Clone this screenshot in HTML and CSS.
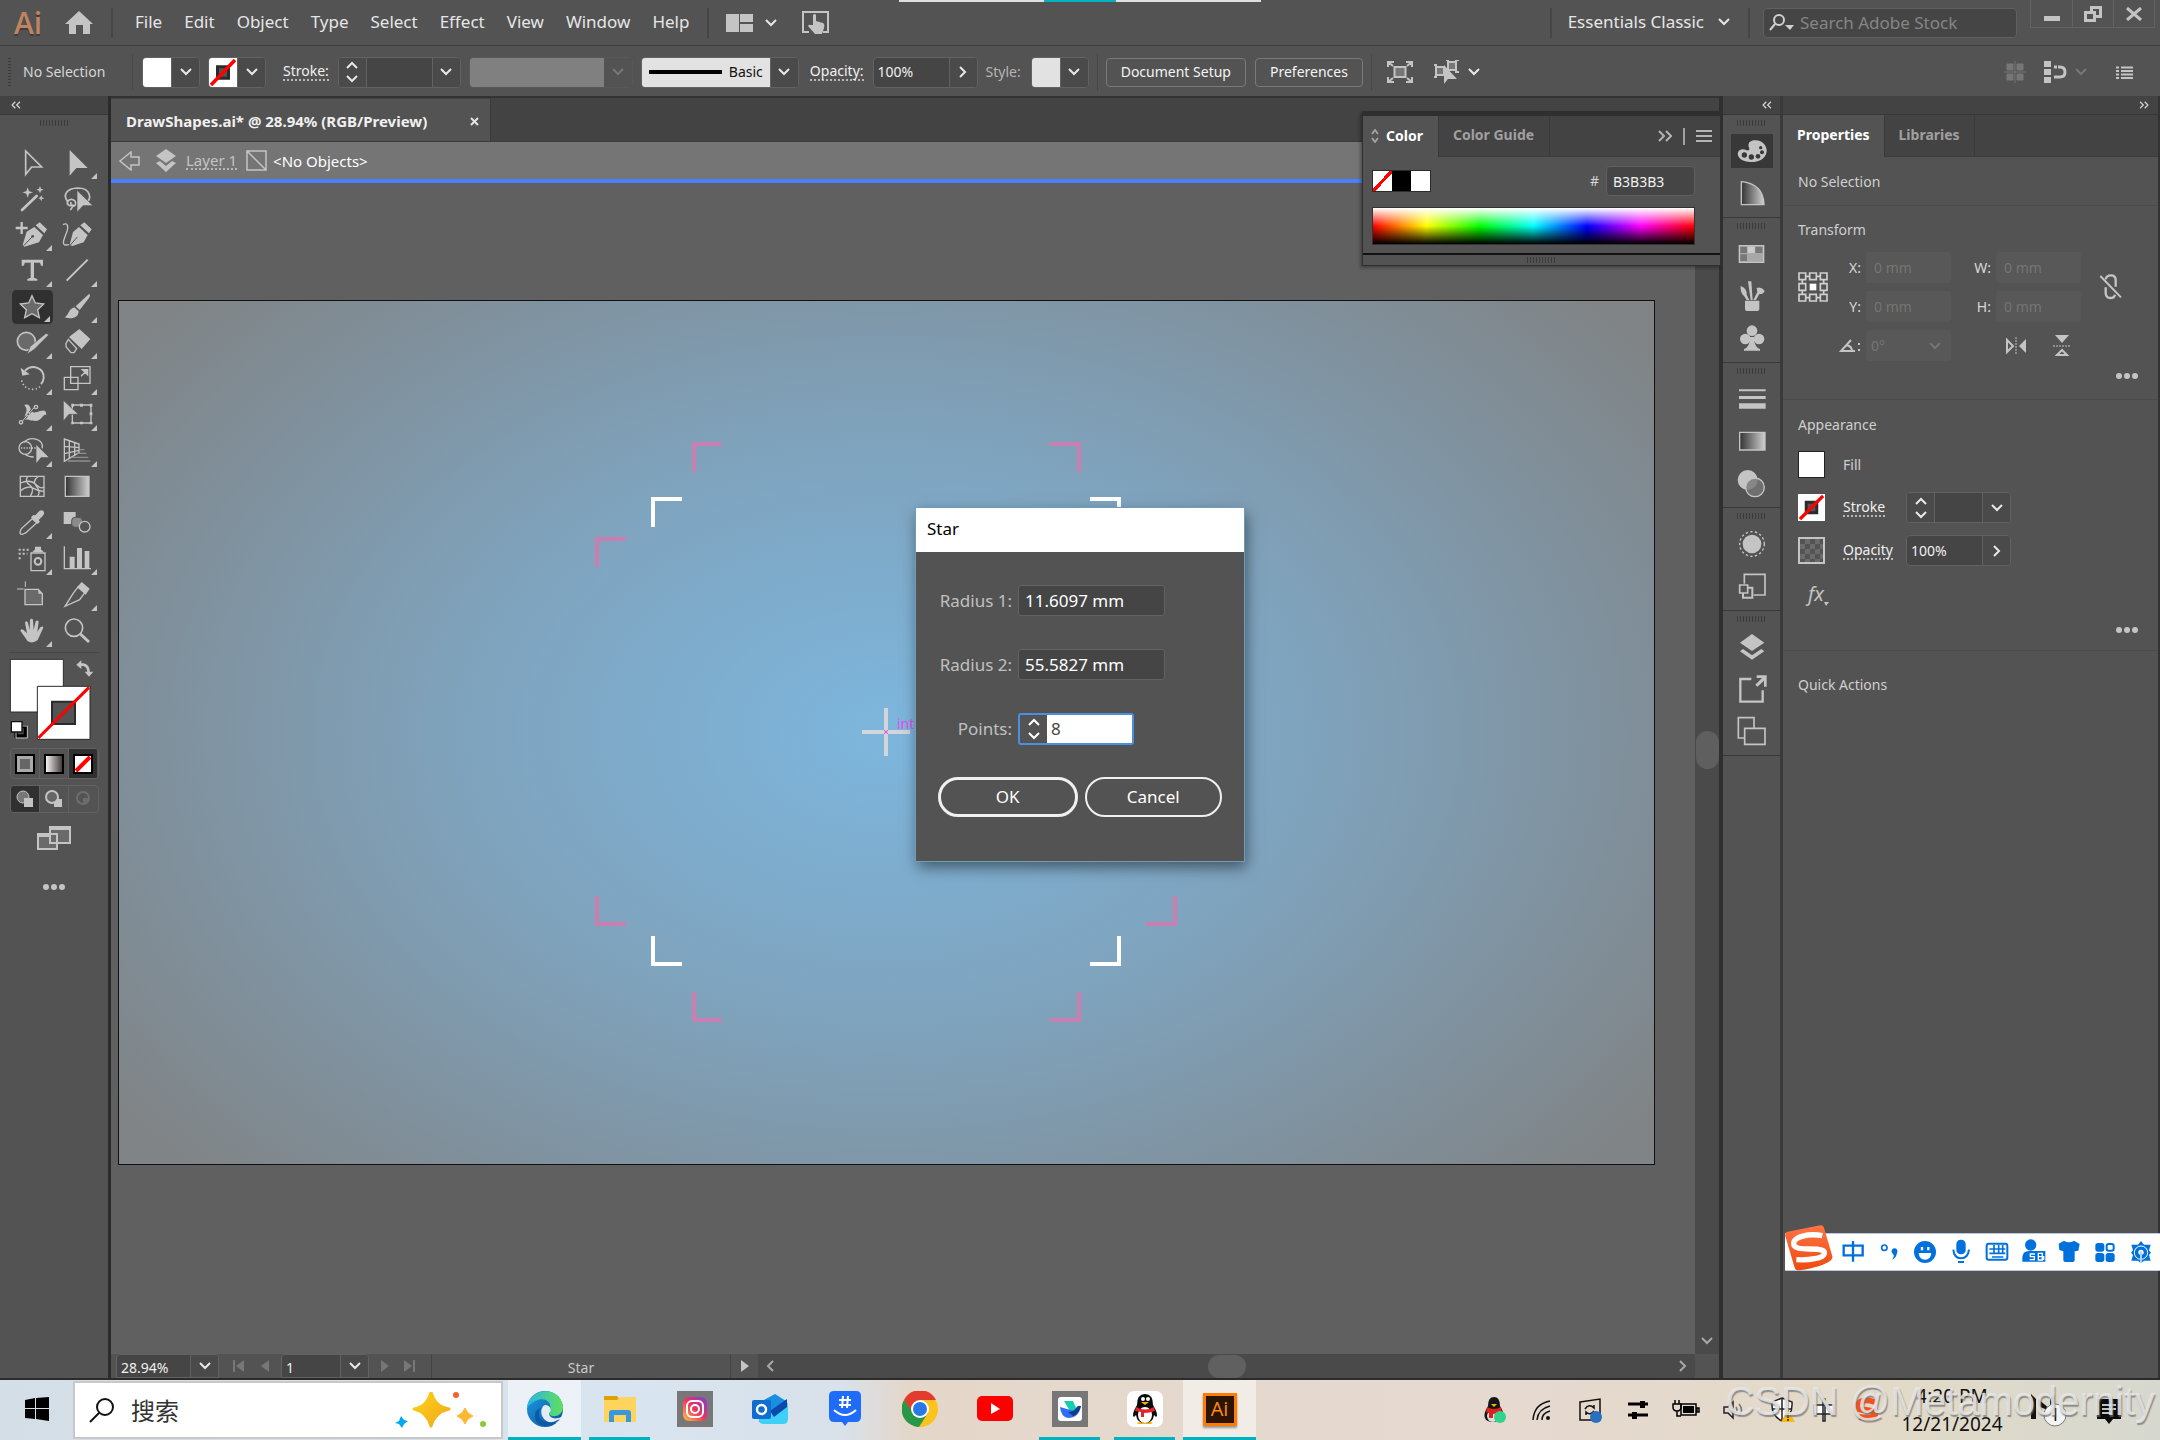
FILE: index.html
```
<!DOCTYPE html>
<html lang="en">
<head>
<meta charset="utf-8">
<title>DrawShapes.ai - Illustrator</title>
<link rel="stylesheet" href="styles.css">
</head>
<body>
<svg class="defs" aria-hidden="true">
  <defs>
    <symbol id="down" viewBox="0 0 12 8"><path d="M1 1l5 5 5-5" fill="none" stroke="currentColor" stroke-width="2"/></symbol>
    <symbol id="up" viewBox="0 0 12 8"><path d="M1 7l5-5 5 5" fill="none" stroke="currentColor" stroke-width="2"/></symbol>
    <symbol id="right" viewBox="0 0 8 12"><path d="M1 1l5 5-5 5" fill="none" stroke="currentColor" stroke-width="2"/></symbol>
    <symbol id="left" viewBox="0 0 8 12"><path d="M7 1L2 6l5 5" fill="none" stroke="currentColor" stroke-width="2"/></symbol>
    <symbol id="dright" viewBox="0 0 14 12"><path d="M1 1l5 5-5 5M8 1l5 5-5 5" fill="none" stroke="currentColor" stroke-width="2"/></symbol>
    <symbol id="dleft" viewBox="0 0 14 12"><path d="M6 1L1 6l5 5M13 1L8 6l5 5" fill="none" stroke="currentColor" stroke-width="2"/></symbol>
    <symbol id="dots" viewBox="0 0 22 6"><g fill="#c4c4c4"><circle cx="3" cy="3" r="3"/><circle cx="11" cy="3" r="3"/><circle cx="19" cy="3" r="3"/></g></symbol>
    <symbol id="none" viewBox="0 0 28 28"><path fill="#fff" d="M0 0h28v28H0z"/><path d="M8.500 8.500h11v11h-11z" fill="#535353" stroke="#2b2b2b" stroke-width="3"/><path d="M2 26L26 2" stroke="#f00" stroke-width="3.500"/></symbol>
    <linearGradient id="grey"><stop offset="0" stop-color="#333"/><stop offset="1" stop-color="#d0d0d0"/></linearGradient>
    <linearGradient id="warm"><stop offset="0" stop-color="#fff"/><stop offset="1" stop-color="#3a3030"/></linearGradient>
    <linearGradient id="edgeA" x1="0" x2="1"><stop offset="0" stop-color="#2bb5e8"/><stop offset="1" stop-color="#5fe05a"/></linearGradient>
    <linearGradient id="edgeB" x1="0" x2="1" y1="0" y2="1"><stop offset="0" stop-color="#1b9de2"/><stop offset="1" stop-color="#0c4f9e"/></linearGradient>
    <linearGradient id="insta" x1="0" y1="1" x2="1" y2="0"><stop offset="0" stop-color="#ffc63f"/><stop offset=".5" stop-color="#f0305f"/><stop offset="1" stop-color="#7a3be0"/></linearGradient>
    <linearGradient id="sogou" x1="0" y1="0" x2="0" y2="1"><stop offset="0" stop-color="#ff7444"/><stop offset="1" stop-color="#f04a10"/></linearGradient>
    <linearGradient id="gold" x1="0" y1="0" x2="1" y2="1"><stop offset="0" stop-color="#ffd31a"/><stop offset="1" stop-color="#f0a81c"/></linearGradient>
  </defs>
</svg>

<div class="desktop">
  <header class="menubar">
    <span class="brand">Ai</span>
    <button class="plain home" aria-label="Home"><svg width="28" height="24" viewBox="0 0 28 24"><path d="M14 0l14 13h-3v10h-7v-9h-7v9H4V13H0z" fill="#c4c4c4"/></svg></button>
    <nav class="menus">
      <a href="#">File</a><a href="#">Edit</a><a href="#">Object</a><a href="#">Type</a><a href="#">Select</a><a href="#">Effect</a><a href="#">View</a><a href="#">Window</a><a href="#">Help</a>
    </nav>
    <button class="plain arrange" aria-label="Arrange documents"><svg width="27" height="18" viewBox="0 0 27 18"><path d="M0 0h13v18H0zM14 0h13v8H14zM14 10h13v8H14z" fill="#c4c4c4"/></svg><svg width="12" height="8"><use href="#down"/></svg></button>
    <button class="plain touch" aria-label="Touch workspace"><svg width="27" height="24" viewBox="0 0 27 24"><path d="M7 21H1V1h25v20h-5" fill="none" stroke="#c4c4c4" stroke-width="2"/><path d="M11 14V4q2-2 3 0v6l7 2q2 1 1 5l-2 6h-7l-7-8q1-2 3-1z" fill="#c4c4c4"/></svg></button>
    <div class="menubar-end">
      <button class="plain switcher">Essentials Classic <svg width="12" height="8"><use href="#down"/></svg></button>
      <label class="stock"><svg width="25" height="18" viewBox="0 0 25 18"><g fill="none" stroke="#d0d0d0" stroke-width="2"><circle cx="10" cy="6" r="5"/><path d="M6 10l-5 6"/></g><path d="M16 11h9l-4 5z" fill="#d0d0d0"/></svg><input type="search" placeholder="Search Adobe Stock" aria-label="Search Adobe Stock"></label>
      <div class="winbtns">
        <button aria-label="Minimize"><svg width="16" height="16"><path d="M0 10h16v5H0z" fill="#c4c4c4"/></svg></button>
        <button aria-label="Restore"><svg width="18" height="16"><path d="M1.500 6.500h9v8h-9zM7.500 6V1.500h9v9H11" fill="none" stroke="#c4c4c4" stroke-width="3"/></svg></button>
        <button aria-label="Close"><svg width="16" height="14"><path d="M1 1l14 12M15 1L1 13" stroke="#c4c4c4" stroke-width="3"/></svg></button>
      </div>
    </div>
  </header>

  <section class="controlbar">
    <i class="vgrip"></i>
    <span class="status">No Selection</span>
    <div class="combo swatch"><span class="chip white"></span><button aria-label="Fill colour"><svg width="12" height="8"><use href="#down"/></svg></button></div>
    <div class="combo swatch"><span class="chip"><svg width="28" height="29" viewBox="0 0 28 28" preserveAspectRatio="none"><use href="#none"/></svg></span><button aria-label="Stroke colour"><svg width="12" height="8"><use href="#down"/></svg></button></div>
    <label class="dotted after" for="stroke-w">Stroke:</label>
    <div class="combo stroke"><button class="spin" aria-label="Step"><svg width="12" height="8"><use href="#up"/></svg><svg width="12" height="8"><use href="#down"/></svg></button><input id="stroke-w" type="text" value=""><button aria-label="Stroke presets"><svg width="12" height="8"><use href="#down"/></svg></button></div>
    <div class="combo profile"><span class="greybar"></span><button disabled aria-label="Width profile"><svg width="12" height="8"><use href="#down"/></svg></button></div>
    <div class="combo brush"><span class="brushline"><i></i>Basic</span><button aria-label="Brush"><svg width="12" height="8"><use href="#down"/></svg></button></div>
    <label class="dotted" for="opacity">Opacity:</label>
    <div class="combo opacity"><input id="opacity" type="text" value="100%"><button aria-label="Opacity slider"><svg width="8" height="12"><use href="#right"/></svg></button></div>
    <span class="dim">Style:</span>
    <div class="combo swatch"><span class="chip light"></span><button aria-label="Graphic style"><svg width="12" height="8"><use href="#down"/></svg></button></div>
    <div class="setup"><button class="outline">Document Setup</button><button class="outline">Preferences</button></div>
    <svg width="26" height="22" viewBox="0 0 26 22"><g stroke="#c4c4c4" stroke-width="2" fill="none"><path d="M7.500 6h11v10h-11z" fill="#777"/><path d="M1 6V1h6M1 1l5 4M25 6V1h-6M25 1l-5 4M1 16v5h6M1 21l5-4M25 16v5h-6M25 21l-5-4"/></g></svg>
    <button class="plain pick" aria-label="Select similar"><svg width="26" height="24" viewBox="0 0 26 24"><g fill="#777" stroke="#c4c4c4" stroke-width="2"><path d="M2 7h8v8H2zM14 2h8v8h-8z"/><path d="M0 5h3M0 17h3M12 0h3M21 0h4M21 12h4" /></g><path d="M10 5v19l4-5h9z" fill="#c4c4c4"/></svg><svg width="12" height="8"><use href="#down"/></svg></button>
    <div class="bar-end">
      <svg width="22" height="22" viewBox="0 0 22 22"><path d="M3 3h6v6H3zM13 3h6v6h-6zM3 13h6v6H3zM13 13h6v6h-6zM11 0v22M0 11h22" fill="#777" stroke="#777" stroke-width="1"/></svg>
      <svg width="24" height="22" viewBox="0 0 24 22"><path d="M1 0h7v6H1zM1 8h7v6H1zM1 16h7v6H1z" fill="#c4c4c4"/><path d="M11 6h6q5 0 5 5t-5 5h-6" fill="none" stroke="#c4c4c4" stroke-width="3" stroke-dasharray="3 1 40"/></svg>
      <svg class="faded" width="12" height="8"><use href="#down"/></svg>
      <svg class="listicon" width="17" height="13" viewBox="0 0 17 13"><path d="M5 1.500h12M5 5h12M5 8.500h12M5 12h12M0 1.500h3M0 5h3M0 8.500h3M0 12h3" stroke="#c4c4c4" stroke-width="2"/></svg>
    </div>
  </section>

  <main class="workspace">
    <aside class="tools">
      <div class="strip start"><svg width="12" height="8" viewBox="0 0 14 12"><use href="#dleft"/></svg></div>
      <i class="hgrip"></i>
      <div class="toolgrid">
        <button aria-label="Selection"><svg viewBox="43 166 108 108"><path d="M78 184v70l18-22h30z" fill="none" stroke="#c4c4c4" stroke-width="5"/></svg></button>
        <button class="more" aria-label="Direct selection"><svg viewBox="178 166 108 108"><path d="M210 181v77l20-23h34z" fill="#c4c4c4"/></svg></button>
        <button aria-label="Magic wand"><svg viewBox="43 274 108 108"><path d="M67 361l44-42" stroke="#c4c4c4" stroke-width="8" stroke-linecap="round"/><path d="M84 293l4 12 12 3-12 4-4 12-4-12-12-4 12-3zM121 289l3 8 8 3-8 3-3 8-3-8-8-3 8-3zM125 317l2 6 7 3-7 2-2 7-3-7-6-2 6-3z" fill="#c4c4c4"/></svg></button>
        <button aria-label="Lasso"><svg viewBox="178 274 108 108"><path d="M206 338c-20-22-4-42 28-43 38 0 46 32 22 47M222 345c-14 8-24-2-16-12 8-8 22-2 22 8 0 12-18 12-14-4M218 345q2 8-6 16" fill="none" stroke="#c4c4c4" stroke-width="5"/><path d="M232 302v66l18-20h30z" fill="#c4c4c4" stroke="#535353" stroke-width="2"/></svg></button>
        <button class="more" aria-label="Pen"><svg viewBox="43 382 108 108"><path d="M48 415h36M66 397v36" stroke="#c4c4c4" stroke-width="7"/><path d="M108 407l12-9 22 21-8 12zM104 412l26 24-12 22-44 13-5-5 12-40z" fill="#c4c4c4"/><path d="M72 468l25-26" stroke="#535353" stroke-width="3"/><circle cx="99" cy="440" r="4" fill="#535353"/></svg></button>
        <button aria-label="Curvature"><svg viewBox="178 382 108 108"><path d="M190 405c14-8 18 6 10 26s-18 40 8 34" fill="none" stroke="#c4c4c4" stroke-width="4"/><path d="M242 407l12-9 22 21-8 12zM238 412l26 24-12 22-34 11-8-4 10-38z" fill="#c4c4c4"/><path d="M212 466l21-24" stroke="#535353" stroke-width="3"/></svg></button>
        <button class="more" aria-label="Type"><svg viewBox="43 490 108 108"><path d="M66 510h64v18h-6l-3-9h-18v45l10 4v5H83v-5l10-4v-45H76l-4 9h-6z" fill="#c4c4c4"/></svg></button>
        <button class="more" aria-label="Line segment"><svg viewBox="178 490 108 108"><path d="M201 573l63-63" stroke="#c4c4c4" stroke-width="6"/></svg></button>
        <button class="more active" aria-label="Star"><svg viewBox="43 598 108 108"><path d="M97 618l10 22 25 3-18 17 5 24-22-12-22 12 5-24-18-17 25-3z" fill="#6a6a6a" stroke="#c4c4c4" stroke-width="4"/></svg></button>
        <button class="more" aria-label="Paintbrush"><svg viewBox="178 598 108 108"><path d="M268 613q6 2 0 12l-28 36-12-11zM224 653l13 12c0 18-20 26-42 18 14-8 10-24 29-30z" fill="#c4c4c4"/></svg></button>
        <button class="more" aria-label="Shaper"><svg viewBox="43 706 108 108"><circle cx="80" cy="755" r="27" fill="#6a6a6a" stroke="#c4c4c4" stroke-width="5"/><path d="M138 732q8-2 8 5l-42 42-22 15 10-24z" fill="#c4c4c4" stroke="#535353" stroke-width="2"/></svg></button>
        <button class="more" aria-label="Eraser"><svg viewBox="178 706 108 108"><path d="M239 718l33 30-26 30-38-36z" fill="#c4c4c4"/><path d="M206 749l25 28-8 12h-9l-15-18v-10z" fill="none" stroke="#c4c4c4" stroke-width="4"/></svg></button>
        <button class="more" aria-label="Rotate"><svg viewBox="43 814 108 108"><path d="M76 843c22-22 58-8 56 22-1 8-4 14-8 18" fill="none" stroke="#c4c4c4" stroke-width="6"/><path d="M63 834l5 24 22-4z" fill="#c4c4c4"/><path d="M66 872q6 26 34 27 16-1 24-12" fill="none" stroke="#c4c4c4" stroke-width="5" stroke-dasharray="4 7"/></svg></button>
        <button class="more" aria-label="Scale"><svg viewBox="178 814 108 108"><path d="M213 831h58v50h-58zM194 863h41v37h-41z" fill="none" stroke="#c4c4c4" stroke-width="4"/><path d="M244 860l14-14M248 840h16v16z" stroke="#c4c4c4" stroke-width="4" fill="#c4c4c4"/></svg></button>
        <button class="more" aria-label="Width"><svg viewBox="43 922 108 108"><path d="M74 946c26-8 12 28 34 22 20-6 32-12 32 8-10-6-14 18-32 18-20 0-24-8-34-2-2-22 16-26 0-46z" fill="#c4c4c4"/><path d="M66 997l38-44" stroke="#535353" stroke-width="7"/><path d="M66 997l38-44" stroke="#c4c4c4" stroke-width="3"/><g fill="#535353" stroke="#c4c4c4" stroke-width="4"><circle cx="64" cy="998" r="5"/><circle cx="86" cy="974" r="5"/><circle cx="109" cy="952" r="5"/></g></svg></button>
        <button class="more" aria-label="Free transform"><svg viewBox="178 922 108 108"><path d="M218 946h56v54h-56z" fill="none" stroke="#c4c4c4" stroke-width="4"/><path d="M241 942h9v9h-9zM270 942h8v9h-8zM270 968h8v9h-8zM270 996h8v8h-8zM241 996h9v8h-9zM215 996h8v8h-8zM215 942h8v9h-8z" fill="#c4c4c4"/><path d="M191 932v62l17-20h28z" fill="#c4c4c4" stroke="#535353" stroke-width="2"/></svg></button>
        <button class="more" aria-label="Shape builder"><svg viewBox="43 1030 108 108"><circle cx="77" cy="1075" r="19" fill="none" stroke="#c4c4c4" stroke-width="4"/><path d="M72 1058c20-20 60-12 56 18M76 1094q10 8 26 8" fill="none" stroke="#c4c4c4" stroke-width="4"/><path d="M64 1075h48" stroke="#c4c4c4" stroke-width="4" stroke-dasharray="4 4"/><path d="M110 1066v54l14-17h23z" fill="#c4c4c4"/></svg></button>
        <button class="more" aria-label="Perspective grid"><svg viewBox="178 1030 108 108"><path d="M194 1048l44 15v26l-44 26zM209 1053v53M225 1058v40M194 1070l44 4M194 1092l44-10" fill="none" stroke="#c4c4c4" stroke-width="4"/><path d="M240 1080h14M232 1091h28M216 1103h50M204 1114h68" stroke="#8f8f8f" stroke-width="4"/></svg></button>
        <button aria-label="Mesh"><svg viewBox="43 1138 108 108"><path d="M62 1160h71v60H62z" fill="none" stroke="#c4c4c4" stroke-width="4"/><path d="M62 1180q30-12 46 4t25 8M62 1204q20-18 40-8t31 8M84 1160q-10 16 6 26t2 34M116 1160q-20 16-6 30t4 30" fill="none" stroke="#c4c4c4" stroke-width="4"/></svg></button>
        <button aria-label="Gradient"><svg viewBox="178 1138 108 108"><path d="M197 1160h71v60h-71z" fill="url(#grey)" stroke="#c4c4c4" stroke-width="4"/></svg></button>
        <button class="more" aria-label="Eyedropper"><svg viewBox="43 75 108 108"><path d="M107 106l13-14q10-4 13 4 2 6-4 12l-12 12 4 5-7 7-20-20 7-7z" fill="#c4c4c4"/><path d="M98 116l13 12-32 30q-14 8-17 3t4-16z" fill="none" stroke="#c4c4c4" stroke-width="4"/></svg></button>
        <button aria-label="Blend"><svg viewBox="178 75 108 108"><path d="M192 96h36v36h-36z" fill="#c4c4c4"/><rect x="216" y="112" width="32" height="30" rx="10" fill="#8a8a8a" stroke="#535353" stroke-width="3"/><circle cx="255" cy="140" r="16" fill="#535353" stroke="#c4c4c4" stroke-width="4"/></svg></button>
        <button class="more" aria-label="Symbol sprayer"><svg viewBox="43 183 108 108"><path d="M94 219h42v53H94z" fill="none" stroke="#c4c4c4" stroke-width="4"/><path d="M98 217q4-8 8-8v-9h18v9q6 2 8 8z" fill="#c4c4c4"/><circle cx="115" cy="244" r="10" fill="none" stroke="#c4c4c4" stroke-width="6"/><path d="M57 209h36M57 221h26M57 235h10" stroke="#c4c4c4" stroke-width="6" stroke-dasharray="6 6"/></svg></button>
        <button class="more" aria-label="Column graph"><svg viewBox="178 183 108 108"><path d="M194 199v67h80" fill="none" stroke="#c4c4c4" stroke-width="4"/><path d="M210 230h15v34h-15zM232 204h15v60h-15zM255 213h14v51h-14z" fill="#c4c4c4"/></svg></button>
        <button aria-label="Artboard"><svg viewBox="43 291 108 108"><path d="M76 328h40l12 13v33H76z" fill="#6a6a6a" stroke="#c4c4c4" stroke-width="4"/><path d="M116 328v13h12z" fill="#c4c4c4"/><path d="M52 327h20M77 304v17" stroke="#c4c4c4" stroke-width="3"/></svg></button>
        <button class="more" aria-label="Slice"><svg viewBox="178 291 108 108"><path d="M246 306l24 20-12 18-26-22z" fill="#c4c4c4"/><path d="M236 320l20 17-16 22-44 20 24-38z" fill="none" stroke="#c4c4c4" stroke-width="4"/></svg></button>
        <button class="more" aria-label="Hand"><svg viewBox="43 399 108 108"><path d="M84 484L62 452q2-8 10-2l10 10-6-32q4-8 9 0l5 22 1-31q5-6 9 0l2 31 6-26q6-6 9 1l-4 30 9-13q8-6 9 1L114 480q-14 12-30 4z" fill="#c4c4c4"/></svg></button>
        <button aria-label="Zoom"><svg viewBox="178 399 108 108"><circle cx="223" cy="443" r="26" fill="none" stroke="#c4c4c4" stroke-width="5"/><path d="M242 462l26 24" stroke="#c4c4c4" stroke-width="9"/></svg></button>
      </div>
      <div class="fillstroke">
        <svg width="108" height="92" viewBox="0 0 324 276"><path d="M27 1h273" stroke="#444" stroke-width="3"/><path d="M31 22h159v158H31z" fill="#fff" stroke="#2b2b2b" stroke-width="3"/><path d="M112 103h158v159H112z" fill="#fff" stroke="#2b2b2b" stroke-width="3"/><path d="M156 149h69v67h-69z" fill="#535353" stroke="#2b2b2b" stroke-width="6"/><path d="M115 258L267 106" stroke="#f00" stroke-width="9"/><path d="M240 38h10q16 2 16 26" fill="none" stroke="#c4c4c4" stroke-width="8"/><path d="M244 25v26l-15-13zM254 59h26l-13 15z" fill="#c4c4c4"/><path d="M52 224h24v28H48v-16" fill="none" stroke="#000" stroke-width="10"/><path d="M34 209h32v31H34z" fill="#fff" stroke="#111" stroke-width="4"/><path d="M68 222h14v36H48v-16" fill="none" stroke="#c4c4c4" stroke-width="3"/></svg>
      </div>
      <div class="modes"><button aria-label="Color"><svg width="20" height="20"><path d="M1 1h18v18H1z" fill="#aaa" stroke="#000" stroke-width="2"/><path d="M5 5h10v10H5z" fill="#666"/></svg></button><button aria-label="Gradient fill"><svg width="20" height="20"><path d="M1 1h18v18H1z" fill="url(#warm)" stroke="#000" stroke-width="2"/></svg></button><button class="active" aria-label="None"><svg width="20" height="20"><path d="M1 1h18v18H1z" fill="#fff" stroke="#000" stroke-width="2"/><path d="M3 17L17 3" stroke="#f00" stroke-width="4"/></svg></button></div>
      <div class="modes"><button class="active" aria-label="Draw normal"><svg width="18" height="18"><circle cx="7" cy="7" r="6" fill="#777" stroke="#c4c4c4"/><path d="M8 8h9v9H8z" fill="#c4c4c4"/></svg></button><button aria-label="Draw behind"><svg width="18" height="18"><path d="M9 9h8v8H9z" fill="#c4c4c4"/><circle cx="7" cy="7" r="6" fill="#666" stroke="#c4c4c4" stroke-width="2"/></svg></button><button disabled aria-label="Draw inside"><svg width="18" height="18"><circle cx="9" cy="8" r="6" fill="none" stroke="#6e6e6e" stroke-width="2"/><path d="M9 8h5q0 5-5 5z" fill="#6e6e6e"/></svg></button></div>
      <button class="plain screen" aria-label="Screen mode"><svg width="34" height="25" viewBox="0 0 34 25"><g fill="#6a6a6a" stroke="#c4c4c4" stroke-width="2"><path d="M1 8h19v15H1zM13 1h20v16H13z"/></g><path d="M1 7h12v4H1zM13 1h20v3H13z" fill="#c4c4c4"/></svg></button>
      <button class="plain moretools" aria-label="Edit toolbar"><svg width="22" height="6"><use href="#dots"/></svg></button>
    </aside>

    <section class="document">
      <div class="doctabs"><a class="doctab" href="#">DrawShapes.ai* @ 28.94% (RGB/Preview)<svg width="9" height="9"><path d="M1 1l7 7M8 1L1 8" stroke="#e4e4e4" stroke-width="2"/></svg></a></div>
      <div class="crumbs">
        <svg width="22" height="20" viewBox="0 0 22 20"><path d="M1 10L12 1v5h8v8h-8v5z" fill="none" stroke="#c4c4c4" stroke-width="1.500"/></svg>
        <svg width="22" height="23" viewBox="0 0 22 23"><path d="M11 0l10 7-10 7L1 7zM1 14l4-2 6 5 6-5 4 2-10 9z" fill="#c4c4c4"/></svg>
        <a class="dotted" href="#">Layer 1</a>
        <svg width="21" height="21" viewBox="0 0 21 21"><path d="M1 1h19v19H1zM1 1l19 19" fill="none" stroke="#c4c4c4" stroke-width="1.500"/></svg>
        <span>&lt;No Objects&gt;</span>
      </div>
      <div class="canvasrow">
        <div class="canvas">
          <div class="artboard">
            <svg viewBox="1 1 1535 863">
              <g fill="none" stroke-width="4">
                <path stroke="#cb7eb0" d="M576 172v-28h28M932 144h29v28M479 267v-28h29M1028 239h29v28M479 596v28h29M1028 624h29v-28M576 692v28h28M932 720h29v-28"/>
                <path stroke="#fff" d="M535 227v-28h29M972 199h29v28M535 636v28h29M972 664h29v-28"/>
                <path stroke="#d2d6d9" d="M744 432h48M768 408v48"/>
              </g>
              <path d="M766 430l4 4M770 430l-4 4" stroke="#f63cf0"/>
              <text x="779" y="429" class="hint">intersect</text>
            </svg>
          </div>
        </div>
        <div class="vscroll"><i></i><svg width="12" height="8"><use href="#down"/></svg></div>
      </div>
      <div class="docfoot">
        <div class="combo zoomlevel"><input type="text" value="28.94%" aria-label="Zoom"><button aria-label="Zoom presets"><svg width="12" height="8"><use href="#down"/></svg></button></div>
        <svg class="nav" width="50" height="12" viewBox="0 0 50 12"><path d="M8 0h2v12H8zM19 0v12l-8-6zM44 0v12l-8-6z" fill="#777"/></svg>
        <div class="combo page"><input type="text" value="1" aria-label="Artboard"><button aria-label="Artboard list"><svg width="12" height="8"><use href="#down"/></svg></button></div>
        <svg class="nav" width="50" height="12" viewBox="0 0 50 12"><path d="M6 0v12l8-6zM29 0v12l8-6zM38 0h2v12h-2z" fill="#777"/></svg>
        <span class="toolname">Star</span>
        <button class="plain play" aria-label="Status menu"><svg width="8" height="12"><path d="M0 0l8 6-8 6z" fill="#c4c4c4"/></svg></button>
        <div class="hscroll"><svg width="8" height="12"><use href="#left"/></svg><i></i><svg width="8" height="12"><use href="#right"/></svg></div>
      </div>
    </section>

    <aside class="dock">
      <div class="strip end"><svg width="12" height="8" viewBox="0 0 14 12"><use href="#dleft"/></svg></div>
      <div class="dockgroup"><i class="hgrip"></i>
        <button class="active" aria-label="Color"><svg viewBox="97 119 126 126"><path d="M150 170q-4-16 14-20c26-4 42 16 40 34-4 26-34 34-56 30-22-2-34-16-30-28 4-10 16-12 26-6 8 2 10-4 6-10z" fill="#c4c4c4"/><g fill="#383838"><circle cx="137" cy="194" r="8"/><circle cx="158" cy="200" r="8"/><circle cx="178" cy="198" r="7"/><circle cx="190" cy="186" r="6"/><circle cx="186" cy="172" r="5"/></g></svg></button>
        <button aria-label="Color guide"><svg viewBox="97 247 126 126"><path d="M128 276q66 6 68 69h-68z" fill="url(#grey)" stroke="#c4c4c4" stroke-width="4"/></svg></button>
      </div>
      <div class="dockgroup"><i class="hgrip"></i>
        <button aria-label="Swatches"><svg viewBox="97 431 126 126"><path d="M122 469h73v50h-73z" fill="#a8a8a8" stroke="#c4c4c4" stroke-width="4"/><path d="M125 472h20v19h-20zM170 472h21v19h-21zM125 495h20v20h-20z" fill="#777"/><path d="M147 472h21v19h-21z" fill="#ccc"/></svg></button>
        <button aria-label="Brushes"><svg viewBox="97 555 126 126"><path d="M139 632h43v25q0 6-6 6h-31q-6 0-6-6zM148 574h10l4 56h-6zM126 588q20 8 18 26l8 16h-8l-8-12q-12-10-10-30zM174 594q12-6 24 8-4 12-16 10l-10 18h-8l12-24z" fill="#c4c4c4"/></svg></button>
        <button aria-label="Symbols"><svg viewBox="97 680 126 126"><g fill="#c4c4c4"><circle cx="160" cy="721" r="16"/><circle cx="140" cy="746" r="16"/><circle cx="181" cy="746" r="16"/><path d="M154 740h12q0 30 18 36v5h-48v-5q18-6 18-36z"/></g></svg></button>
      </div>
      <div class="dockgroup"><i class="hgrip"></i>
        <button aria-label="Stroke"><svg viewBox="97 867 126 126"><path d="M121 901h80v6h-80zM121 921h80v9h-80zM121 943h80v16h-80z" fill="#c4c4c4"/></svg></button>
        <button aria-label="Gradient"><svg viewBox="97 992 126 126"><path d="M123 1029h76v53h-76z" fill="url(#grey)" stroke="#c4c4c4" stroke-width="4"/></svg></button>
        <button aria-label="Transparency"><svg viewBox="97 220 126 126"><circle cx="147" cy="274" r="30" fill="#c4c4c4"/><circle cx="169" cy="296" r="28" fill="#777" fill-opacity=".8" stroke="#c4c4c4" stroke-width="4"/></svg></button>
      </div>
      <div class="dockgroup"><i class="hgrip"></i>
        <button aria-label="Appearance"><svg viewBox="97 404 126 126"><circle cx="160" cy="467" r="28" fill="#c4c4c4"/><circle cx="160" cy="467" r="37" fill="none" stroke="#c4c4c4" stroke-width="4" stroke-dasharray="7 7"/></svg></button>
        <button aria-label="Graphic styles"><svg viewBox="97 532 126 126"><path d="M137 588v-28h62v62h-34" fill="none" stroke="#c4c4c4" stroke-width="5"/><path d="M133 600h28v30h-28z" fill="none" stroke="#c4c4c4" stroke-width="6"/><path d="M123 592h24v24h-24z" fill="#535353" stroke="#c4c4c4" stroke-width="5"/></svg></button>
      </div>
      <div class="dockgroup last"><i class="hgrip"></i>
        <button aria-label="Layers"><svg viewBox="97 716 126 126"><path d="M160 740l37 26-37 25-36-25zM124 792l9-7 27 19 28-19 9 7-37 25z" fill="#c4c4c4"/></svg></button>
        <button aria-label="Asset export"><svg viewBox="97 840 126 126"><path d="M158 873h-33v68h67v-34" fill="none" stroke="#c4c4c4" stroke-width="7"/><path d="M174 862h30v34h-8v-18l-20 18-6-6 20-20h-16z" fill="#c4c4c4"/></svg></button>
        <button aria-label="Artboards"><svg viewBox="97 966 126 126"><path d="M119 989h47v61h-47z" fill="none" stroke="#c4c4c4" stroke-width="5"/><path d="M138 1021h61v48h-61z" fill="#535353" stroke="#c4c4c4" stroke-width="5"/></svg></button>
      </div>
    </aside>

    <aside class="properties">
      <div class="strip end"><svg width="12" height="8" viewBox="0 0 14 12"><use href="#dright"/></svg></div>
      <div class="paneltabs"><a class="on" href="#">Properties</a><a href="#">Libraries</a></div>
      <section class="sel">No Selection</section>
      <section class="transform">
        <h2>Transform</h2>
        <div class="tgrid">
          <svg class="ref" width="30" height="30" viewBox="0 0 90 90"><g fill="none" stroke="#d0d0d0" stroke-width="5"><path d="M3 3h20v20H3zM35 3h20v20H35zM67 3h20v20H67zM3 35h20v20H3zM67 35h20v20H67zM3 67h20v20H3zM35 67h20v20H35zM67 67h20v20H67zM23 13h12M55 13h12M23 77h12M55 77h12M13 23v12M13 55v12M77 23v12M77 55v12"/></g><path d="M35 35h20v20H35z" fill="#fff"/></svg>
          <label for="tx">X:</label><input id="tx" disabled value="0 mm">
          <label for="tw">W:</label><input id="tw" disabled value="0 mm">
          <svg class="link" width="24" height="26" viewBox="0 0 72 78"><path d="M20 16q2-12 16-12t14 14v20M20 40v18q2 14 14 14 12 0 14-10" fill="none" stroke="#c4c4c4" stroke-width="7"/><path d="M4 6l62 64" stroke="#c4c4c4" stroke-width="6"/></svg>
          <label for="ty">Y:</label><input id="ty" disabled value="0 mm">
          <label for="th">H:</label><input id="th" disabled value="0 mm">
          <label for="ta"><svg width="22" height="14" viewBox="0 0 22 14"><path d="M12 1L2 12h14M7 6q6 1 6 6" fill="none" stroke="#c4c4c4" stroke-width="2"/><path d="M19 4h2v2h-2zM19 10h2v2h-2z" fill="#c4c4c4"/></svg></label>
          <div class="angle"><select id="ta" disabled><option>0°</option></select><svg width="12" height="8"><use href="#down"/></svg></div>
          <div class="flips"><svg width="22" height="18" viewBox="0 0 22 18"><path d="M2 3v12l6-6z" fill="none" stroke="#c4c4c4" stroke-width="2"/><path d="M21 2v14l-7-7z" fill="#c4c4c4"/><path d="M11 0v18" stroke="#c4c4c4" stroke-dasharray="2 1"/></svg><svg width="18" height="22" viewBox="0 0 18 22"><path d="M2 0h14L9 8z" fill="#c4c4c4"/><path d="M4 20h10l-5-5z" fill="none" stroke="#c4c4c4" stroke-width="2"/><path d="M0 11h18" stroke="#c4c4c4" stroke-dasharray="2 1"/></svg></div>
        </div>
        <button class="plain dots" aria-label="More transform options"><svg width="22" height="6"><use href="#dots"/></svg></button>
      </section>
      <section class="appearance">
        <h2>Appearance</h2>
        <div class="arow"><span class="sw fillsw"></span><span>Fill</span></div>
        <div class="arow"><span class="sw"><svg width="27" height="27" viewBox="0 0 28 28"><use href="#none"/></svg></span><label class="dotted" for="ps">Stroke</label><div class="combo pstroke"><button class="spin" aria-label="Step"><svg width="12" height="8"><use href="#up"/></svg><svg width="12" height="8"><use href="#down"/></svg></button><input id="ps" type="text" value=""><button aria-label="Stroke presets"><svg width="12" height="8"><use href="#down"/></svg></button></div></div>
        <div class="arow"><span class="sw check"></span><label class="dotted" for="po">Opacity</label><div class="combo pstroke"><input id="po" type="text" value="100%"><button aria-label="Opacity slider"><svg width="8" height="12"><use href="#right"/></svg></button></div></div>
        <div class="arow fx"><button class="plain">fx<svg width="5" height="4"><path d="M0 0h5L2 4z" fill="#c4c4c4"/></svg></button></div>
        <button class="plain dots" aria-label="More appearance options"><svg width="22" height="6"><use href="#dots"/></svg></button>
      </section>
      <section class="quick"><h2>Quick Actions</h2></section>
    </aside>
  </main>

  <footer class="taskbar">
    <button class="plain startbtn" aria-label="Start"><svg width="24" height="24" viewBox="0 0 24 24"><path d="M0 3l10-2v10H0zM11 1l13-1v11H11zM0 12h10v10L0 21zM11 12h13v12l-13-2z" fill="#000"/></svg></button>
    <label class="search"><svg width="25" height="25" viewBox="0 0 25 25"><g fill="none" stroke="#111" stroke-width="2"><circle cx="16" cy="9" r="8"/><path d="M10 15L1 24"/></g></svg><input type="text" placeholder="搜索" aria-label="搜索">
      <svg width="92" height="36" viewBox="0 0 92 36"><path d="M36 0q4 15 18 17-14 3-18 17-4-14-17-17 13-2 17-17z" fill="url(#gold)" stroke="url(#gold)" stroke-width="3" stroke-linejoin="round"/><path d="M70 16q2 6 8 8-6 2-8 8-2-6-8-8 6-2 8-8z" fill="#fcb830" stroke="#fcb830" stroke-width="1"/><path d="M6 24l3 4 4 1-4 3-2 4-3-4-4-1 4-2z" fill="#00a8f0"/><circle cx="61" cy="3" r="3" fill="#f2622e"/><circle cx="88" cy="32" r="3" fill="#8cc83c"/></svg></label>
    <nav class="apps">
      <a class="app open focus" href="#" aria-label="Edge"><svg viewBox="0 0 36 36"><circle cx="18" cy="18" r="18" fill="url(#edgeB)"/><path d="M0 17C2-4 34-6 36 16c0 11-14 11-14 6 6-14-10-20-22-5z" fill="url(#edgeA)"/><path d="M18 14c6 0 7 6 4 8 0 5 6 7 12 4l1 1q-3 5-7 5c-16 0-16-16-10-18z" fill="#e4ecf4"/><path d="M15 16c-8 8 0 22 18 12-10 12-30 8-24-8z" fill="#0c59a4"/></svg></a>
      <a class="app open" href="#" aria-label="File Explorer"><svg viewBox="0 0 36 36"><path d="M2 5h13l3 4H2z" fill="#e0a000"/><path d="M2 9h13l3-3h16v25H2z" fill="#ffd45c"/><path d="M7 31V22q0-3 3-3h16q3 0 3 3v9h-5v-7H12v7z" fill="#3a96dd"/></svg></a>
      <a class="app" href="#" aria-label="Instagram"><svg viewBox="0 0 36 36"><path d="M0 0h36v36H0z" fill="#777"/><rect x="6" y="6" width="24" height="24" rx="6" fill="url(#insta)"/><g fill="none" stroke="#fff" stroke-width="2"><rect x="10" y="10" width="16" height="16" rx="5"/><circle cx="18" cy="18" r="4"/></g></svg></a>
      <a class="app" href="#" aria-label="Outlook"><svg viewBox="0 0 36 36"><path d="M10 10l13-7 11 7v19q0 3-3 3H10q-3 0-3-3z" fill="#1a8ee0"/><path d="M7 26l29-14v16q0 5-5 5H12q-5 0-5-5z" fill="#3fd0f8"/><path d="M18 20L35 8v8L22 26z" fill="#0b4aa8"/><rect x="0" y="9" width="19" height="19" rx="2" fill="#0f6cd0"/><circle cx="9.500" cy="18.500" r="4.500" fill="none" stroke="#fff" stroke-width="2.500"/></svg></a>
      <a class="app" href="#" aria-label="GroupMe"><svg viewBox="0 0 36 36"><path d="M7 0h22q5 0 5 5v20q0 6-5 6h-8l-3 4-3-4H7q-5 0-5-6V5q0-5 5-5z" fill="#1f6bfa"/><path d="M16 5l-1 12M21 5l-1 12M12 9h12M12 14h12M7 19q11 10 22 0" fill="none" stroke="#fff" stroke-width="2"/></svg></a>
      <a class="app" href="#" aria-label="Chrome"><svg viewBox="0 0 36 36"><circle cx="18" cy="18" r="18" fill="#fcc31e"/><path d="M2 9A18 18 0 0134 9H18l-8 14z" fill="#e33b2e"/><path d="M2 9a18 18 0 0015 27l9-14H11z" fill="#279847"/><circle cx="18" cy="18" r="9" fill="#fff"/><circle cx="18" cy="18" r="7" fill="#2a78e6"/></svg></a>
      <a class="app" href="#" aria-label="YouTube"><svg viewBox="0 0 36 36"><rect y="5" width="36" height="25" rx="5" fill="#f00"/><path d="M14 12v11l9-5z" fill="#fff"/></svg></a>
      <a class="app open" href="#" aria-label="Lark"><svg viewBox="0 0 36 36"><path d="M0 0h36v36H0z" fill="#777"/><rect x="6" y="6" width="24" height="24" rx="3" fill="#fff"/><path d="M12 10h9l4 9-6 3z" fill="#10d0b0"/><path d="M8 16l14 4q3-6 7-5-2 12-13 12-7-1-8-11z" fill="#2f6cf8"/><path d="M16 21q6 0 10-6h3q-3 9-8 10z" fill="#163a88"/></svg></a>
      <a class="app open" href="#" aria-label="QQ"><svg viewBox="0 0 36 36"><rect width="36" height="36" rx="7" fill="#fff"/><path d="M10 32q8-4 16 0l-2 1H11z" fill="#f5b400"/><path d="M10 14q0-11 8-11t8 11q6 10 3 12l-2-2q-1 8-9 8t-9-8l-2 2q-3-2 3-12z" fill="#0a0a0a"/><ellipse cx="18" cy="24" rx="7" ry="8" fill="#fff"/><path d="M9 16q9 5 18 0l1 4q-5 2-11 2v4h-3v-5l-6-1z" fill="#e8202a"/><path d="M14 11h8l-4 3z" fill="#f5b400"/><circle cx="16" cy="8" r="2" fill="#fff"/><circle cx="21" cy="8" r="2" fill="#fff"/></svg></a>
      <a class="app open focus aiapp" href="#"><span>Ai</span></a>
    </nav>
    <div class="tray">
      <svg viewBox="0 0 28 28"><path d="M8 10q0-9 6-9t6 9q5 8 3 12-1 4-9 4t-9-4q-2-4 3-12z" fill="#151515"/><ellipse cx="13" cy="20" rx="6" ry="6" fill="#ddd"/><path d="M7 11q7 4 14 0l1 5q-5 2-9 2v4H9v-5l-3-1z" fill="#e02020"/><path d="M11 8h6l-3 3z" fill="#f5b400"/><circle cx="20" cy="21" r="6" fill="#2fd48a"/></svg>
      <svg viewBox="0 0 28 28"><g fill="none" stroke="#111" stroke-width="1.500"><path d="M5 24Q6 8 22 5M9 24q1-11 13-14M14 24q0-7 8-9" /></g><circle cx="20" cy="22" r="2" fill="#111"/></svg>
      <svg viewBox="0 0 28 28"><path d="M4 6l20-3v21H4z" fill="none" stroke="#111" stroke-width="1.500"/><path d="M9 13q4-6 9-1v-3M18 15q-4 5-8 1v3" fill="none" stroke="#111" stroke-width="1.500"/><circle cx="20" cy="21" r="6" fill="#2a70c0"/></svg>
      <svg viewBox="0 0 28 28"><path d="M4 8h20M4 19h20" stroke="#000" stroke-width="3"/><path d="M16 5h5v7h-5zM8 16h5v7H8z" fill="#000"/></svg>
      <svg viewBox="0 0 28 28"><path d="M9 8h15v11H9zM25 12h2v4h-2z" fill="none" stroke="#000" stroke-width="1.500"/><path d="M11 10h11v7H11z"/><path d="M3 4v4M7 4v4M1 8h8v3q0 4-4 4t-4-4zM5 15v5h4" fill="none" stroke="#000" stroke-width="1.500"/></svg>
      <svg viewBox="0 0 28 28"><path d="M4 11h4l5-5v16l-5-5H4z" fill="none" stroke="#222" stroke-width="1.500"/><path d="M16 11q2 3 0 6M19 8q5 6 0 12" fill="none" stroke="#777" stroke-width="1.500"/></svg>
      <svg class="near" viewBox="0 0 28 28"><path d="M14 2l10 4q1 14-10 19Q3 20 4 6z" fill="#fff" stroke="#222" stroke-width="1.500"/><path d="M14 2v23M4 13h20" stroke="#222" stroke-width="1.500"/><path d="M20 13l7 13H13z" fill="#f8b816"/><path d="M20 17v5M20 23v2" stroke="#222" stroke-width="1.500"/></svg>
      <svg class="near" viewBox="0 0 28 28"><path d="M4 9h20v9H4zM13 3h2v22h-2z" fill="#fff" stroke="#222" stroke-width="1.500"/></svg>
      <svg viewBox="0 0 28 28"><path d="M23 6Q10 2 6 8t8 6q10 1 9 5t-16 2" fill="none" stroke="#f6511d" stroke-width="6"/></svg>
      <time class="clock">4:20 PM<br>12/21/2024</time>
      <svg class="wide" viewBox="0 0 40 36"><path d="M4 2l5 5v20H4zM11 7l12 10V6l5-3v14H18l-7-3z" fill="#111"/><circle cx="28" cy="23" r="11" fill="#f4f4f4" stroke="#777"/><text x="28" y="29" class="badge">1</text></svg>
      <svg viewBox="0 0 28 28"><path d="M2 3h24v20h-8l-4 5-4-5H2z" fill="#0a0a0a"/><path d="M7 9h14M7 13h14M7 17h10" stroke="#fff" stroke-width="1.500"/></svg>
    </div>
    <span class="watermark">CSDN @Metamodernity</span>
  </footer>

  <div class="topstrip"><i></i></div>

  <section class="colorpanel">
    <div class="ctabs"><a class="on" href="#"><svg width="8" height="14" viewBox="0 0 8 14"><path d="M1 5l3-4 3 4M1 9l3 4 3-4" fill="none" stroke="#a0a0a0" stroke-width="2"/></svg>Color</a><a href="#">Color Guide</a><span class="ctools"><svg width="14" height="12"><use href="#dright"/></svg><i></i><svg width="16" height="12"><path d="M0 1h16M0 6h16M0 11h16" stroke="#b4b4b4" stroke-width="2"/></svg></span></div>
    <div class="cbody">
      <div class="crow"><span class="cswatches"><i class="cn"></i><i class="ck"></i><i class="cw"></i></span><label for="hex">#</label><input id="hex" type="text" value="B3B3B3"></div>
      <div class="spectrum"></div>
    </div>
    <div class="cfoot"><i class="hgrip"></i></div>
  </section>

  <form class="dialog">
    <h1>Star</h1>
    <div class="dbody">
      <div class="drow"><label for="r1">Radius 1:</label><input id="r1" type="text" value="11.6097 mm"></div>
      <div class="drow"><label for="r2">Radius 2:</label><input id="r2" type="text" value="55.5827 mm"></div>
      <div class="drow"><label for="pts">Points:</label><div class="points"><button type="button" class="spin" aria-label="Step points"><svg width="12" height="8"><use href="#up"/></svg><svg width="12" height="8"><use href="#down"/></svg></button><input id="pts" type="text" value="8"></div></div>
      <div class="dbtns"><button type="button" class="ok">OK</button><button type="button">Cancel</button></div>
    </div>
  </form>

  <div class="ime">
    <svg class="imelogo" width="48" height="46" viewBox="314 80 144 138"><path d="M322 100l98-19q8-1 11 7l25 86q2 8-6 13-24 18-92 29-12 1-15-8l-28-94q-3-12 7-14z" fill="url(#sogou)"/><path d="M426 112c-44-8-84 4-86 22-1 18 24 18 48 18 34 0 48 4 44 14-4 14-44 20-84 18" fill="none" stroke="#fff" stroke-width="16"/></svg>
    <svg viewBox="463 105 108 108"><path d="M489 140h57v29h-57zM517 126v62" fill="none" stroke="#0071dc" stroke-width="7"/></svg>
    <svg viewBox="574 105 108 108"><circle cx="614" cy="146" r="8" fill="none" stroke="#0071dc" stroke-width="5"/><path d="M636 160a9 9 0 1116 2q-2 14-14 20 6-12 4-14z" fill="#0071dc"/></svg>
    <svg viewBox="681 105 108 108"><circle cx="735" cy="159" r="33" fill="#0071dc"/><path d="M716 162h38q-2 20-19 20t-19-20z" fill="#fff"/><path d="M726 144v10M745 144v10" stroke="#fff" stroke-width="7"/></svg>
    <svg viewBox="787 105 108 108"><rect x="827" y="122" width="28" height="44" rx="13" fill="#0071dc"/><path d="M818 152q2 26 23 26t24-26M832 189h18" fill="none" stroke="#0071dc" stroke-width="6"/></svg>
    <svg viewBox="897 105 108 108"><rect x="920" y="134" width="62" height="48" rx="6" fill="#fff" stroke="#0071dc" stroke-width="6"/><path d="M928 150h48M928 163h48M942 138v26M956 138v26M968 138v26M936 174h34" stroke="#0071dc" stroke-width="5"/></svg>
    <svg viewBox="1010 105 108 108"><circle cx="1057" cy="138" r="17" fill="#0071dc"/><path d="M1032 188v-14q2-18 20-18h49v32z" fill="#0071dc"/><path d="M1070 165h-14v8h12v9h-14M1080 163h12v20h-12zM1080 173h16v10" fill="none" stroke="#fff" stroke-width="4"/></svg>
    <svg viewBox="1111 105 108 108"><path d="M1134 134l16-9q15 10 30 0l17 10-4 20-11 2v26q0 6-6 6h-22q-6 0-6-6v-26l-12-4z" fill="#0071dc"/></svg>
    <svg viewBox="1222 105 108 108"><g fill="#0071dc"><rect x="1247" y="132" width="27" height="26" rx="8"/><rect x="1247" y="162" width="27" height="27" rx="8"/><rect x="1278" y="162" width="27" height="27" rx="8"/></g><rect x="1281" y="135" width="21" height="20" rx="6" fill="#fff" stroke="#0071dc" stroke-width="6"/></svg>
    <svg viewBox="1330 105 108 108"><path d="M1384 126l9 11h20l-5 17 6 7-6 7 5 17h-20l-9 8-9-8h-20l5-17-6-7 6-7-5-17h20z" fill="#0071dc"/><circle cx="1384" cy="161" r="20" fill="#0071dc" stroke="#fff" stroke-width="3"/><circle cx="1384" cy="160" r="8" fill="#fff"/><path d="M1384 158v34" stroke="#fff" stroke-width="6"/><path d="M1384 158v34" stroke="#0071dc" stroke-width="2"/></svg>
  </div>
</div>
</body>
</html>
```
FILE: styles.css
```
* { box-sizing: border-box; }

body {
  margin: 0;
  background: #535353;
  color: #d6d6d6;
  font: 14px/20px "Noto Sans", "Noto Sans CJK SC", sans-serif;
}

.defs { position: absolute; width: 0; height: 0; }
svg { display: block; flex: none; }
a { color: inherit; text-decoration: none; }
h1, h2 { margin: 0; font-size: 14px; font-weight: 400; }

button, input, select { font: inherit; color: inherit; margin: 0; padding: 0; border: 0; background: none; }
input { min-width: 0; outline: 0; }
button { display: flex; align-items: center; justify-content: center; }
.plain { flex: none; }

.desktop {
  position: relative;
  display: flex;
  flex-direction: column;
  min-height: 100vh;
  overflow: hidden;
}

/* Menu bar */
.menubar {
  display: flex;
  align-items: center;
  height: 46px;
  flex: none;
  padding-left: 14px;
  border-bottom: 1px solid #404040;
  font-size: 17px;
  line-height: 24px;
  color: #e6e6e6;
}
.brand { width: 51px; font: 600 30px/32px "Open Sans", sans-serif; color: #c08460; text-shadow: 0 2px #3c3c3c; }
.menus {
  display: flex;
  gap: 22px;
  height: 30px;
  margin-left: 18px;
  padding: 2px 18px 4px 22px;
  border: solid #464646;
  border-width: 0 2px;
}
.arrange { gap: 12px; margin-left: 17px; color: #e6e6e6; }
.touch { margin-left: 25px; }
.menubar-end { display: flex; align-items: center; align-self: stretch; margin-left: auto; padding-right: 5px; }
.switcher { gap: 14px; height: 30px; padding: 0 18px 2px 16px; border: solid #464646; border-width: 0 2px; }
.stock {
  display: flex;
  align-items: center;
  gap: 6px;
  width: 254px;
  height: 30px;
  margin: 0 13px;
  padding-left: 5px;
  border: 1px solid #606060;
  border-radius: 4px;
  background: #454545;
}
.stock input { flex: 1; }
.stock input::placeholder { color: #858585; }
.winbtns { display: flex; align-self: flex-start; height: 28px; border: 1px solid #636363; border-top: 0; }
.winbtns button { width: 41px; border-left: 1px solid #636363; }
.winbtns button:first-child { border-left: 0; }

/* Compound fields */
.combo {
  display: flex;
  flex: none;
  height: 31px;
  border: 1px solid #626262;
  border-radius: 4px;
  background: #454545;
  color: #f0f0f0;
  overflow: hidden;
}
.combo button { width: 28px; border-left: 1px solid #626262; background: #4a4a4a; color: #e8e8e8; }
.combo input { flex: 1; padding-left: 4px; width: 0; }
.combo .spin { border: 0; border-right: 1px solid #626262; }
.spin { flex-direction: column; gap: 6px; }
.dotted { border-bottom: 2px dotted #b8b8b8; line-height: 16px; color: #f0f0f0; }

/* Control bar */
.controlbar {
  display: flex;
  align-items: center;
  height: 50px;
  flex: none;
  padding: 2px 0 0 8px;
}
.vgrip { width: 3px; height: 28px; background: repeating-linear-gradient(#3a3a3a 0 1px, #535353 1px 3px); }
.status { width: 110px; margin: 0 9px 0 12px; line-height: 36px; border-right: 1px solid #474747; flex: none; white-space: nowrap; }
.swatch { width: 58px; margin-right: 8px; }
.chip { width: 28px; overflow: hidden; }
.white { background: #fff; }
.light { background: #e2e2e2; }
.controlbar .after { margin: 0 9px; }
.stroke { width: 123px; }
.profile { width: 164px; margin: 0 8px; border-color: #585858; }
.greybar { flex: 1; background: #808080; }
.profile button { background: #535353; border: 0; color: #777; }
.brush { width: 158px; margin-right: 11px; }
.brushline { flex: 1; display: flex; align-items: center; gap: 7px; padding: 0 7px; background: #e2e2e2; color: #111; }
.brushline i { flex: 1; height: 4px; background: #000; }
.opacity { width: 105px; margin: 0 8px 0 9px; }
.dim { color: #b4b4b4; margin-right: 10px; }
.setup { display: flex; gap: 9px; padding: 4px 8px; border: solid #474747; border-width: 0 1px; margin-right: 15px; }
.outline { height: 29px; padding: 0 14px; border: 1px solid #7a7a7a; border-radius: 4px; color: #f4f4f4; white-space: nowrap; }
.pick { gap: 8px; margin-left: 21px; color: #e8e8e8; }
.bar-end { display: flex; align-items: center; margin-left: auto; padding-right: 27px; }
.bar-end svg + svg { margin-left: 17px; }
.bar-end .faded { color: #777; margin-left: 8px; }
.bar-end .listicon { margin-left: 29px; }

/* Workspace */
.workspace {
  flex: 1;
  display: grid;
  grid-template-columns: 111px 1fr 60px 377px;
  border-bottom: 2px solid #2b2b2b;
}
.strip { display: flex; align-items: center; height: 19px; background: #434343; color: #d0d0d0; border-bottom: 1px solid #383838; }
.start { padding-left: 10px; }
.end { justify-content: flex-end; padding-right: 8px; }
.hgrip { display: block; width: 29px; height: 6px; margin: 5px auto 4px; background: repeating-linear-gradient(90deg, #3a3a3a 0 1px, #535353 1px 3px); }

.tools { border-right: 3px solid #2b2b2b; }
.toolgrid { display: grid; grid-template-columns: 45px 45px; grid-auto-rows: 36px; justify-content: center; padding: 15px 0 3px 1px; }
.toolgrid button { position: relative; }
.toolgrid svg { width: 36px; height: 36px; }
.toolgrid .active { border: solid #535353; border-width: 1px 2px; border-radius: 6px; background: #303030; }
.more::after { content: ""; position: absolute; right: 3px; bottom: 2px; border: 3px solid; border-color: transparent #c4c4c4 #c4c4c4 transparent; }
.modes { display: flex; width: 89px; height: 31px; margin: 4px auto 6px; border: 1px solid #626262; border-radius: 4px; overflow: hidden; }
.modes + .modes { height: 28px; margin-top: 0; }
.modes button { flex: 1; border-left: 1px solid #606060; }
.modes button:first-child { border: 0; }
.modes .active { background: #303030; }
.screen { margin: 13px auto 0; }
.moretools { margin: 33px auto 0; }

/* Document window */
.document { display: flex; flex-direction: column; min-width: 0; border-right: 4px solid #2f2f2f; }
.doctabs { height: 46px; padding-top: 1px; background: #434343; border-top: 2px solid #333; border-bottom: 1px solid #3c3c3c; display: flex; }
.doctab { display: flex; align-items: center; justify-content: space-between; width: 380px; padding: 2px 11px 0 15px; background: #535353; border-right: 1px solid #3a3a3a; color: #f0f0f0; font-size: 15px; font-weight: 700; white-space: nowrap; }
.crumbs { display: flex; align-items: center; gap: 9px; height: 41px; padding-left: 8px; background: #757575; border-bottom: 4px solid #4a80ff; color: #fff; font-size: 15px; }
.crumbs a { color: #c4c4c4; }
.crumbs svg:first-child { margin-right: 5px; }
.crumbs svg + span { margin-left: -3px; }
.canvasrow { flex: 1; display: flex; }
.canvas { flex: 1; padding: 117px 40px 100px 7px; background: #606060; }
.artboard {
  border: 1px solid #111;
  background: radial-gradient(ellipse 940px 650px at 50% 50%, #7db6dd 0%, #7fa3bd 45%, #80929f 75%, #808486 100%);
}
.artboard svg { width: 100%; height: auto; }
.hint { font-size: 14px; fill: #e84cf0; }
.vscroll { width: 24px; background: #4a4a4a; display: flex; flex-direction: column; align-items: center; color: #a8a8a8; padding-bottom: 9px; }
.vscroll i { width: 23px; height: 38px; margin: 548px 0 auto; border-radius: 12px; background: #5f5f5f; }
.docfoot { display: flex; align-items: center; height: 24px; padding-left: 5px; }
.docfoot .combo { height: 24px; border-radius: 4px 4px 0 0; }
.zoomlevel { width: 103px; }
.docfoot input, .toolname { padding-top: 4px; line-height: 20px; }
.page { width: 88px; }
.nav { margin: 0 6px; }
.toolname { width: 300px; text-align: center; border: solid #444; border-width: 0 1px; color: #c8c8c8; }
.play { width: 27px; }
.hscroll { flex: 1; align-self: stretch; display: flex; align-items: center; padding: 0 8px; margin-right: 24px; background: #4a4a4a; color: #a8a8a8; }
.hscroll i { width: 38px; height: 23px; margin: 0 auto 0 434px; border-radius: 12px; background: #606060; }

/* Icon dock */
.dock { border-right: 3px solid #3a3a3a; }
.dock .strip { padding-right: 7px; }
.dockgroup { padding-bottom: 3px; border-bottom: 1px solid #383838; }
.dockgroup button { width: 42px; height: 42px; margin: 0 auto; }
.dockgroup svg { width: 42px; height: 42px; }
.dockgroup .active { background: #383838; border: solid #535353; border-width: 4px 0; }

/* Properties */
.properties { border-right: 2px solid #333; }
.paneltabs { display: flex; height: 42px; background: #434343; border-bottom: 1px solid #3c3c3c; font-weight: 700; color: #a0a0a0; }
.paneltabs a { padding: 10px 14px; border-right: 1px solid #3a3a3a; }
.paneltabs .on { height: 42px; background: #535353; color: #fff; }
.properties section { border-bottom: 1px solid #4a4a4a; padding: 15px 20px 0 15px; color: #cfcfcf; }
.properties .sel { height: 49px; }
.properties .transform { height: 194px; padding-top: 14px; }
.tgrid { display: grid; grid-template-columns: 30px 38px 85px 45px 85px 42px; grid-auto-rows: 31px; row-gap: 8px; margin-top: 12px; align-items: center; }
.tgrid label { text-align: right; padding-right: 5px; justify-self: end; color: #d8d8d8; }
.tgrid input, .angle { height: 31px; border-radius: 3px; background: #585858; color: #757575; padding-left: 8px; width: 85px; }
.ref { grid-row: 1 / 3; }
.link { grid-row: 1 / 3; grid-column: 6; justify-self: end; }
.angle { display: flex; align-items: center; padding: 0 10px 0 5px; }
.angle select { flex: 1; appearance: none; opacity: 1; }
.tgrid label[for="ta"] { grid-column: 1 / 3; }
.flips { grid-column: 4 / 7; display: flex; align-items: center; gap: 26px; padding-left: 54px; }
.dots { margin: 12px 0 0 auto; }
.appearance { height: 251px; }
.arow { display: flex; align-items: center; height: 43px; }
.appearance h2 { margin-bottom: 8px; }
.sw { width: 27px; height: 27px; margin-right: 18px; }
.fillsw { background: #fff; border: 1px solid #222; }
.check { border: 2px solid #c4c4c4; background: repeating-conic-gradient(#6a6a6a 0 25%, #535353 0 50%) 0 0 / 10px 10px; }
.arow .dotted { width: auto; }
.pstroke { width: 105px; margin-left: auto; margin-right: 127px; }
.fx { padding-left: 10px; }
.fx button { font: italic 20px/24px "Noto Sans", sans-serif; color: #c4c4c4; align-items: flex-end; }
.properties .quick { border: 0; padding-top: 24px; }

/* Taskbar */
.taskbar {
  position: relative;
  display: flex;
  align-items: stretch;
  height: 60px;
  flex: none;
  background: linear-gradient(90deg, #d3dee6 0%, #d8e4ef 30%, #d9e1ea 39%, #e4d7ca 42%, #e6d9d0 70%, #e2dac8 88%, #d6d8cf 100%);
}
.startbtn { width: 73px; padding-bottom: 2px; }
.search { display: flex; align-items: center; gap: 17px; width: 430px; margin: 1px 4px 1px 0; padding: 0 14px; border: 2px solid #c8c8c8; background: #fff; }
.search input { flex: 1; font-size: 24px; }
.search input::placeholder { color: #333; }
.apps { display: flex; }
.app { display: flex; align-items: center; justify-content: center; width: 61px; margin: 0 7px; border-bottom: 3px solid transparent; padding-top: 1px; }
.app svg { width: 36px; height: 36px; }
.open { border-color: #00b2c0; }
.focus { width: 73px; margin: 0 1px; background: rgba(255, 255, 255, .5); }
.aiapp span { width: 34px; height: 33px; border: 3px solid #ff7c00; background: #2b1400; color: #ff8a10; font: 20px/26px "Open Sans", sans-serif; text-align: center; box-shadow: 0 2px 2px #999; }
.tray { display: flex; align-items: center; margin-left: auto; padding-right: 37px; }
.tray svg { width: 28px; height: 28px; margin-right: 20px; }
.tray .near { margin-right: 14px; }
.tray .wide { width: 40px; height: 36px; margin: 0 28px 0 23px; }
.tray svg:last-child { margin-right: 0; }
.clock { width: 104px; text-align: center; font-size: 19px; line-height: 28px; color: #111; }
.badge { font: 18px "Noto Sans", sans-serif; text-anchor: middle; fill: #111; }
.watermark {
  position: absolute;
  right: 5px;
  top: -2px;
  font: 40px/46px "Liberation Sans", sans-serif;
  color: rgba(232, 232, 232, .85);
  text-shadow: 1px 2px 1px rgba(110, 110, 110, .7);
  white-space: nowrap;
}

/* Handle of a docked capture toolbar */
.topstrip { position: absolute; top: 0; left: 899px; width: 362px; height: 2px; background: #e0e0e0; }
.topstrip i { display: block; width: 72px; height: 2px; margin: 0 auto; background: #00b2c0; }

/* Floating color panel */
.colorpanel { position: absolute; left: 1362px; top: 111px; width: 360px; background: #535353; border: solid #2f2f2f; border-width: 5px 2px 1px 1px; box-shadow: -2px 2px 3px rgba(0, 0, 0, .3); }
.ctabs { display: flex; height: 41px; background: #434343; border-bottom: 1px solid #3c3c3c; font-weight: 700; color: #a0a0a0; }
.ctabs a { display: flex; align-items: center; gap: 7px; padding: 0 15px 2px 14px; border-right: 1px solid #3a3a3a; }
.ctabs .on { height: 41px; padding-left: 8px; background: #535353; color: #fff; }
.ctools { display: flex; align-items: center; gap: 11px; margin-left: auto; padding-right: 8px; color: #b4b4b4; }
.ctools i { width: 2px; height: 17px; background: #a0a0a0; }
.cbody { padding: 9px 25px 8px 9px; border-bottom: 2px solid #111; }
.crow { display: flex; align-items: center; }
.cswatches { display: flex; border: 1px solid #2b2b2b; }
.cswatches i { width: 19px; height: 20px; }
.cn { background: linear-gradient(to bottom right, #fff 44%, #f00 44% 56%, #fff 56%); }
.ck { background: #000; }
.cw { background: #fff; }
.crow label { margin: 0 7px 0 auto; }
.crow input { width: 89px; height: 30px; padding-left: 6px; border: 1px solid #606060; border-radius: 4px; background: #454545; color: #f0f0f0; }
.spectrum {
  height: 38px;
  margin-top: 11px;
  border: 1px solid #333;
  background: linear-gradient(#fff, rgba(255, 255, 255, 0) 50%, rgba(0, 0, 0, 0) 50%, #000), linear-gradient(90deg, #f00, #ff0, #0f0, #0ff, #00f, #f0f, #f00);
}
.cfoot { height: 10px; display: flex; align-items: center; }
.cfoot .hgrip { margin: 0 auto; }

/* Star dialog */
.dialog { position: absolute; left: 916px; top: 508px; width: 328px; background: #535353; box-shadow: 0 0 0 1px #6f9cb8, 2px 6px 14px rgba(0, 0, 0, .5); font-size: 17px; line-height: 24px; }
.dialog h1 { height: 44px; padding: 0 11px; background: #fff; color: #000; font-size: 17px; line-height: 42px; }
.dbody { padding: 33px 22px 44px; }
.drow { display: grid; grid-template-columns: 74px 1fr; column-gap: 6px; align-items: center; height: 31px; margin-bottom: 33px; }
.drow label { text-align: right; color: #c0c0c0; white-space: nowrap; }
.drow > input { width: 147px; height: 31px; padding-left: 6px; border: 1px solid #626262; border-radius: 3px; background: #454545; color: #fff; }
.points { display: flex; width: 116px; height: 32px; border: 2px solid #4a90e0; border-radius: 3px; color: #fff; }
.points .spin { width: 27px; }
.points input { flex: 1; width: 0; padding-left: 4px; background: #fff; color: #444; }
.dbtns { display: flex; gap: 7px; margin-top: 1px; }
.dbtns button { flex: 1; height: 40px; border: 2px solid #f0f0f0; border-radius: 20px; color: #fff; }
.dbtns .ok { border-width: 3px; }

/* Input method bar */
.ime { position: absolute; right: 0; top: 1233px; display: flex; align-items: center; height: 38px; padding-right: 1px; background: #fff; border: solid #b8c8e0; border-width: 1px 0; }
.ime svg { width: 36px; height: 36px; }
.ime .imelogo { width: 48px; height: 46px; margin: -8px 2px 0 0; }
```
